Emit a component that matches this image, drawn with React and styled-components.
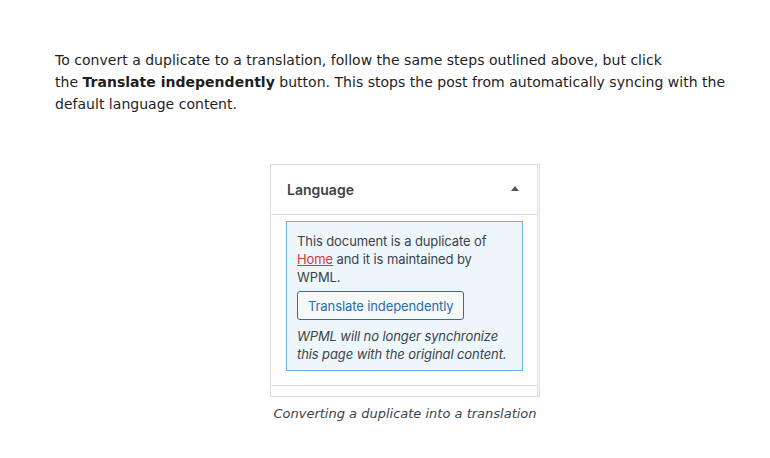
import React from "react";
import styled, { createGlobalStyle } from "styled-components";

const GlobalStyle = createGlobalStyle`
  body {
    margin: 0;
    background: #fff;
    font-family: Inter, "Noto Sans", sans-serif;
  }
`;

const Page = styled.div`
  width: 700px;
  padding: 49px 0 0 55px;
`;

const Paragraph = styled.p`
  margin: 0;
  font-family: "DejaVu Sans", Verdana, sans-serif;
  font-size: 14px;
  line-height: 22px;
  color: #1e1e1e;
  letter-spacing: 0.02px;
`;

const Figure = styled.figure`
  margin: 49px 0 0;
  display: flex;
  flex-direction: column;
  align-items: center;
`;

const Frame = styled.div`
  width: 268px;
  border: 1px solid #dcdcde;
  display: flex;
  flex-direction: column;
  background: #fff;
`;

const Panel = styled.div`
  width: 266px;
  border-right: 1px solid #dcdcde;
`;

const Header = styled.div`
  height: 49px;
  display: flex;
  align-items: center;
  justify-content: space-between;
  padding: 0 18px 0 16px;
  border-bottom: 1px solid #dcdcde;
`;

const Title = styled.h3`
  margin: 0;
  font-size: 14px;
  font-weight: 600;
  color: #3c434a;
`;

const Arrow = styled.span`
  width: 0;
  height: 0;
  margin-top: -2px;
  border-left: 4px solid transparent;
  border-right: 4px solid transparent;
  border-bottom: 5px solid #50575e;
`;

const Body = styled.div`
  padding: 6px 14px 14px 15px;
  border-bottom: 1px solid #dcdcde;
`;

const Notice = styled.div`
  border: 1px solid #72aee6;
  background: #edf6fb;
  padding: 10px 10px 7px 10px;
  font-size: 13px;
  line-height: 18px;
  color: #3c434a;
  letter-spacing: -0.1px;
`;

const Text = styled.p`
  margin: 0;
  font-style: ${(p) => (p.$italic ? "italic" : "normal")};
`;

const Link = styled.a`
  color: #d63638;
  text-decoration: underline;
`;

const Button = styled.button`
  margin: 5px 0 7px;
  height: 29px;
  padding: 0 10px;
  border: 1px solid #2271b1;
  border-radius: 3px;
  background: #f6f7f7;
  color: #2271b1;
  font-family: inherit;
  font-size: 13px;
  letter-spacing: -0.1px;
`;

const Spacer = styled.div`
  height: 10px;
`;

const Caption = styled.figcaption`
  margin-top: 8px;
  font-family: "DejaVu Sans", Verdana, sans-serif;
  font-size: 13px;
  line-height: 18px;
  font-style: italic;
  color: #3c434a;
`;

export default function App() {
  return (
    <>
      <GlobalStyle />
      <Page>
        <Paragraph>
          To convert a duplicate to a translation, follow the same steps outlined above, but click
          <br />
          the <strong>Translate independently</strong> button. This stops the post from automatically syncing with the
          default language content.
        </Paragraph>
        <Figure>
          <Frame>
            <Panel>
              <Header>
                <Title>Language</Title>
                <Arrow />
              </Header>
              <Body>
                <Notice>
                  <Text>
                    This document is a duplicate of <Link href="#">Home</Link> and it is maintained by WPML.
                  </Text>
                  <Button>Translate independently</Button>
                  <Text $italic>WPML will no longer synchronize this page with the original content.</Text>
                </Notice>
              </Body>
              <Spacer />
            </Panel>
          </Frame>
          <Caption>Converting a duplicate into a translation</Caption>
        </Figure>
      </Page>
    </>
  );
}
